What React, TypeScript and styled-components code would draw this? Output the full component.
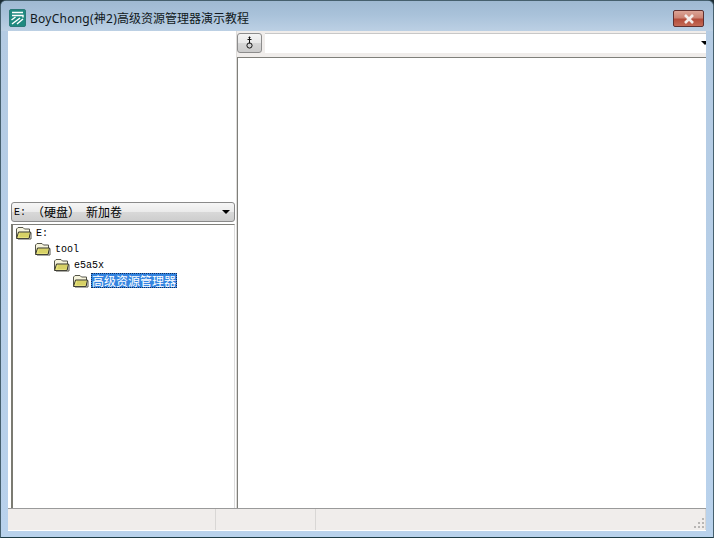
import styled, { createGlobalStyle } from 'styled-components';

const GlobalStyle = createGlobalStyle`
  html, body {
    margin: 0;
    padding: 0;
    background: #1c2c34;
  }
`;

const Frame = styled.div`
  width: 714px;
  height: 538px;
  box-sizing: border-box;
  display: flex;
  flex-direction: column;
  overflow: hidden;
  border: 1px solid #46606e;
  border-bottom-color: #1d3a44;
  border-radius: 6px 6px 0 0;
  background: linear-gradient(180deg, #a3bdd8 0, #b4cbe3 30px, #b9d2ec 100%);
`;

const TitleBar = styled.div`
  height: 30px;
  flex: none;
  box-sizing: border-box;
  display: flex;
  align-items: center;
  padding: 3px 9px 0 8px;
  background: linear-gradient(180deg, #9fb9d2 0, #a9c2da 14px, #bcd0e4 30px);
`;

const TitleText = styled.div`
  margin-left: 4px;
  flex: 1;
  font: 12px 'Noto Sans', 'Noto Sans CJK SC', sans-serif;
  color: #101820;
  white-space: nowrap;
`;

const TitleLatin = styled.span`
  letter-spacing: 0.25px;
`;

const CloseButton = styled.div`
  width: 31px;
  height: 17px;
  box-sizing: border-box;
  margin-top: 2px;
  display: flex;
  align-items: center;
  justify-content: center;
  border: 1px solid #5e3030;
  border-radius: 2px;
  background: linear-gradient(180deg, #dca496 0, #cc8474 45%, #b34c3a 55%, #c46a56 100%);
`;

const Client = styled.div`
  flex: 1;
  min-height: 0;
  margin: 0 7px 6px;
  display: flex;
  flex-direction: column;
  background: #f0edeb;
`;

const Panes = styled.div`
  flex: 1;
  min-height: 0;
  display: grid;
  grid-template-columns: 229px 1fr;
  background: #fff;
`;

const LeftPane = styled.div`
  display: flex;
  flex-direction: column;
  padding: 171px 1px 0 3px;
  background: #fff;
  border-right: 1px solid #dedcda;
`;

const DriveCombo = styled.div`
  height: 20px;
  flex: none;
  box-sizing: border-box;
  display: flex;
  align-items: center;
  padding: 0 3px 0 2px;
  border: 1px solid #8a8a8a;
  border-radius: 3px;
  background: linear-gradient(180deg, #f6f6f6 0, #ebebeb 48%, #d8d8d8 52%, #cdcdcd 100%);
  color: #000;
  white-space: pre;
`;

const DriveLatin = styled.span`
  font: 10px 'Liberation Mono', monospace;
`;

const DriveCjk = styled.span`
  font: 12px 'Noto Sans CJK SC', sans-serif;
  padding-bottom: 2px;
`;

const ComboArrow = styled.span<{ $right?: number }>`
  width: 0;
  height: 0;
  margin-left: auto;
  margin-right: ${(p) => p.$right ?? 0}px;
  border-left: 4px solid transparent;
  border-right: 4px solid transparent;
  border-top: 4px solid #000;
`;

const Tree = styled.div`
  flex: 1;
  min-height: 0;
  margin-top: 2px;
  box-sizing: border-box;
  border-left: 2px solid #7b7b72;
  border-top: 1px solid #7f7f7a;
  border-right: 1px solid #dcdcdc;
  display: flex;
  flex-direction: column;
`;

const TreeRow = styled.div<{ $level: number }>`
  height: 16px;
  flex: none;
  display: flex;
  align-items: center;
  gap: 2px;
  padding-left: ${(p) => 2 + p.$level * 19}px;
`;

const TreeLabel = styled.span`
  font: 10px 'Liberation Mono', monospace;
  line-height: 14px;
  padding: 2px 0 0 2px;
  color: #000;
  white-space: nowrap;
`;

const SelectedLabel = styled.span`
  font: 12px 'Noto Sans CJK SC', sans-serif;
  line-height: 15px;
  padding: 0 1px 0 1px;
  margin-top: -1px;
  color: #fff;
  background: #3484e0;
  outline: 1px dotted #14305c;
  outline-offset: -1px;
  white-space: nowrap;
`;

const RightPane = styled.div`
  display: flex;
  flex-direction: column;
  min-width: 0;
  background: #fff;
`;

const AddressBar = styled.div`
  height: 26px;
  flex: none;
  box-sizing: border-box;
  display: flex;
  align-items: center;
  gap: 3px;
  padding: 0 0 3px 0;
  background: #f0edeb;
`;

const UpButton = styled.div`
  width: 25px;
  height: 20px;
  box-sizing: border-box;
  display: flex;
  align-items: center;
  justify-content: center;
  border: 1px solid #8c8c8c;
  border-radius: 3px;
  background: linear-gradient(180deg, #f4f4f4 0, #e8e8e8 48%, #d6d6d6 52%, #cbcbcb 100%);
`;

const AddressCombo = styled.div`
  flex: 1;
  height: 20px;
  box-sizing: border-box;
  display: flex;
  align-items: center;
  background: #fff;
  border-top: 1px solid #c8c8c8;
  overflow: hidden;
`;

const ListView = styled.div`
  flex: 1;
  min-height: 0;
  border-top: 1px solid #7f7f7a;
  border-left: 1px solid #7f7f7a;
  background: #fff;
`;

const StatusBar = styled.div`
  height: 23px;
  flex: none;
  box-sizing: border-box;
  display: grid;
  grid-template-columns: 208px 100px 1fr;
  border-top: 1px solid #9a9a9a;
  border-bottom: 1px solid #fff;
  background: #f0edeb;
  position: relative;
`;

const StatusCell = styled.div`
  border-right: 1px solid #d9d7d5;
  &:last-child {
    border-right: 0;
  }
`;

const Grip = styled.svg`
  position: absolute;
  right: 1px;
  bottom: 1px;
`;

const FolderGlyph = styled.svg`
  flex: none;
`;

function AppIcon() {
  return (
    <svg width="17" height="18" viewBox="0 0 17 18">
      <rect x="0.5" y="0.5" width="16" height="17" rx="1.5" fill="#1f8a80" stroke="#2a7a78" />
      <path d="M3 3.5h11M3 6.5h11v2" stroke="#fff" strokeWidth="1.4" fill="none" />
      <path d="M2.5 11l4-3M3 15l8-6M8 15l6-5" stroke="#fff" strokeWidth="1.5" fill="none" />
    </svg>
  );
}

function CloseGlyph() {
  return (
    <svg width="12" height="10" viewBox="0 0 12 10">
      <path d="M2 1l8 8M10 1l-8 8" stroke="#f4ecea" strokeWidth="2.6" fill="none" />
    </svg>
  );
}

function FolderIcon() {
  return (
    <FolderGlyph width="17" height="14" viewBox="0 0 17 14">
      <path d="M1.5 11.5V3L3 1.5h5L9.5 3h5v8.5z" fill="#f6f4dc" stroke="#55554a" />
      <path d="M1.5 12.5L3.5 6h12l-1.5 6.5z" fill="#e6e27c" stroke="#33332a" />
      <path d="M5 8h9M4.5 10h9" stroke="#c8c050" />
      <path d="M16 6.5v6.5H3" stroke="#55554a" fill="none" />
    </FolderGlyph>
  );
}

function UpIcon() {
  return (
    <svg width="9" height="13" viewBox="0 0 9 13">
      <path d="M4.5 0.5v7M2.5 3.5h4M3.5 1.5h2" stroke="#111" fill="none" />
      <circle cx="4.5" cy="9.5" r="2.6" fill="none" stroke="#111" />
    </svg>
  );
}

function GripIcon() {
  return (
    <Grip width="11" height="11" viewBox="0 0 11 11">
      <g fill="#b8b6b4">
        <rect x="8" y="0" width="2" height="2" />
        <rect x="4" y="4" width="2" height="2" />
        <rect x="8" y="4" width="2" height="2" />
        <rect x="0" y="8" width="2" height="2" />
        <rect x="4" y="8" width="2" height="2" />
        <rect x="8" y="8" width="2" height="2" />
      </g>
    </Grip>
  );
}

const folders = [
  { level: 0, label: 'E:' },
  { level: 1, label: 'tool' },
  { level: 2, label: 'e5a5x' },
];

export default function App() {
  return (
    <>
      <GlobalStyle />
      <Frame>
        <TitleBar>
          <AppIcon />
          <TitleText>
            <TitleLatin>BoyChong(神2)</TitleLatin>高级资源管理器演示教程
          </TitleText>
          <CloseButton>
            <CloseGlyph />
          </CloseButton>
        </TitleBar>
        <Client>
          <Panes>
            <LeftPane>
              <DriveCombo>
                <DriveLatin>{'E: '}</DriveLatin>
                <DriveCjk>（硬盘）</DriveCjk>
                <DriveLatin>{' '}</DriveLatin>
                <DriveCjk>新加卷</DriveCjk>
                <ComboArrow $right={1} />
              </DriveCombo>
              <Tree>
                {folders.map((f) => (
                  <TreeRow key={f.label} $level={f.level}>
                    <FolderIcon />
                    <TreeLabel>{f.label}</TreeLabel>
                  </TreeRow>
                ))}
                <TreeRow $level={3}>
                  <FolderIcon />
                  <SelectedLabel>高级资源管理器</SelectedLabel>
                </TreeRow>
              </Tree>
            </LeftPane>
            <RightPane>
              <AddressBar>
                <UpButton>
                  <UpIcon />
                </UpButton>
                <AddressCombo>
                  <ComboArrow $right={-3} />
                </AddressCombo>
              </AddressBar>
              <ListView />
            </RightPane>
          </Panes>
          <StatusBar>
            <StatusCell />
            <StatusCell />
            <StatusCell />
            <GripIcon />
          </StatusBar>
        </Client>
      </Frame>
    </>
  );
}
